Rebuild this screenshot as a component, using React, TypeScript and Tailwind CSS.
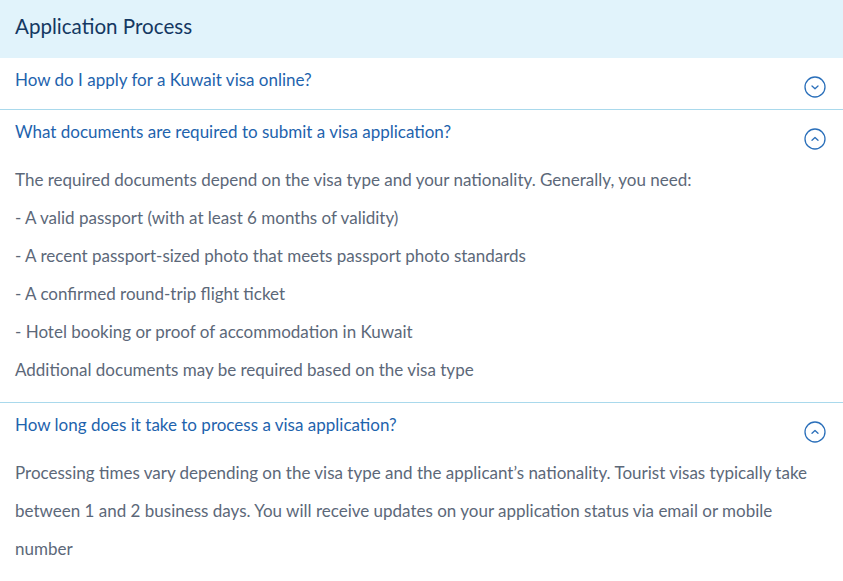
import React from 'react';

type Item = {
  q: string;
  open: boolean;
  lines?: string[];
};

const items: Item[] = [
  { q: 'How do I apply for a Kuwait visa online?', open: false },
  {
    q: 'What documents are required to submit a visa application?',
    open: true,
    lines: [
      'The required documents depend on the visa type and your nationality. Generally, you need:',
      '- A valid passport (with at least 6 months of validity)',
      '- A recent passport-sized photo that meets passport photo standards',
      '- A confirmed round-trip flight ticket',
      '- Hotel booking or proof of accommodation in Kuwait',
      'Additional documents may be required based on the visa type',
    ],
  },
  {
    q: 'How long does it take to process a visa application?',
    open: true,
    lines: [
      'Processing times vary depending on the visa type and the applicant\u2019s nationality. Tourist visas typically take between 1 and 2 business days. You will receive updates on your application status via email or mobile number',
    ],
  },
];

function ChevronCircle({ open }: { open: boolean }) {
  return (
    <svg width="22" height="22" viewBox="0 0 22 22" fill="none" className="shrink-0">
      <circle cx="11" cy="11" r="10" stroke="#2a6fba" strokeWidth="1.3" />
      {open ? (
        <path d="M8 12.3 L11 9.5 L14 12.3" stroke="#2a6fba" strokeWidth="1.3" strokeLinecap="round" strokeLinejoin="round" />
      ) : (
        <path d="M8 9.9 L11 12.7 L14 9.9" stroke="#2a6fba" strokeWidth="1.3" strokeLinecap="round" strokeLinejoin="round" />
      )}
    </svg>
  );
}

export default function App() {
  return (
    <div className="w-[843px] h-[581px] overflow-hidden bg-white font-['Lato',sans-serif]">
      <div className="bg-[#e1f3fb] h-[58px] px-[15px] flex items-center">
        <h2 className="text-[20.6px] text-[#143862] leading-none pb-[6px]">Application Process</h2>
      </div>

      {items.map((item, i) => (
        <div key={item.q} className={i > 0 ? 'border-t border-[#a9d9ec]' : ''}>
          <div className="flex justify-between items-start pl-[15px] pr-[17px] h-[51px]">
            <p className="pt-[11px] text-[17px] leading-[22px] text-[#1e63ad]">{item.q}</p>
            <div className="mt-[18px]">
              <ChevronCircle open={item.open} />
            </div>
          </div>
          {item.open && item.lines && (
            <div className="pl-[15px] pr-[20px] pb-[13px] text-[17px] leading-[38px] text-[#5c6879]">
              {item.lines.map((l) => (
                <p key={l}>{l}</p>
              ))}
            </div>
          )}
        </div>
      ))}
    </div>
  );
}
